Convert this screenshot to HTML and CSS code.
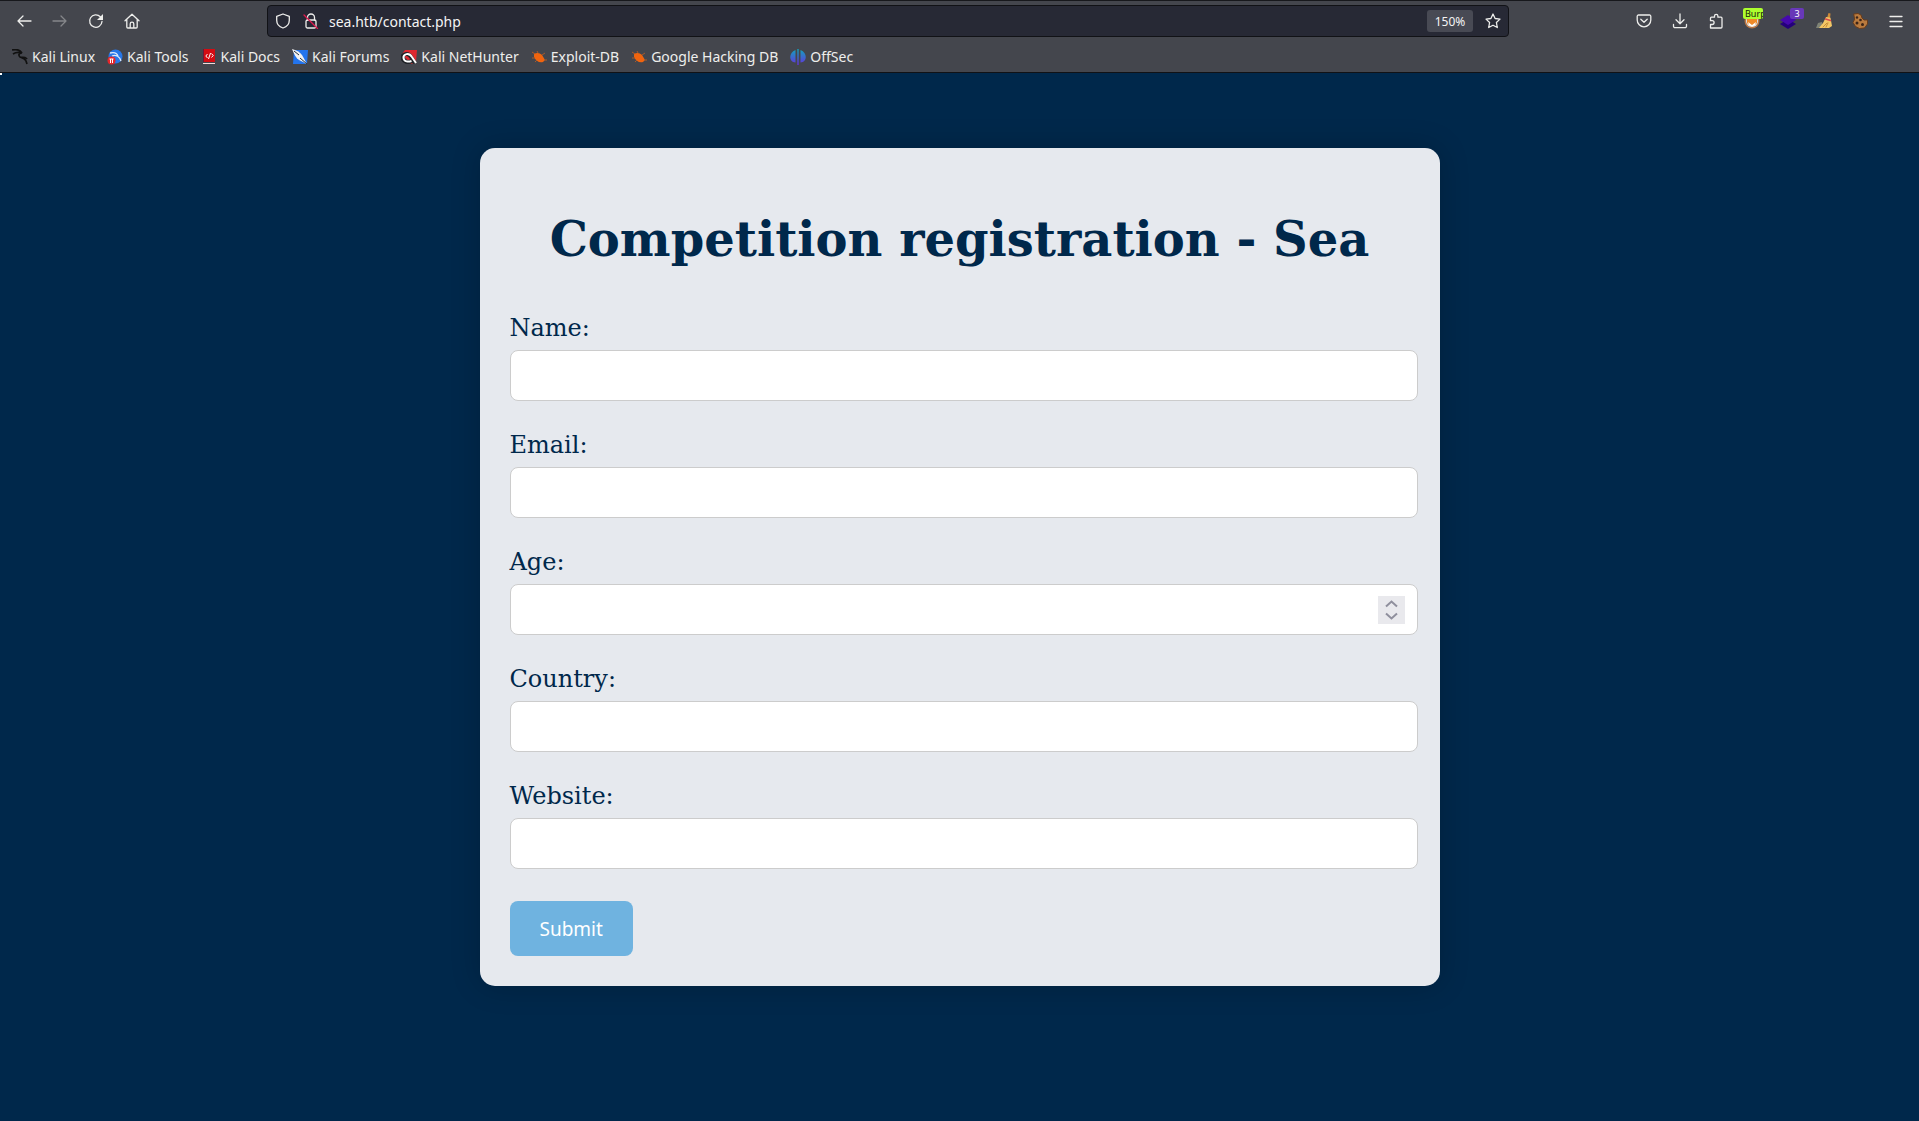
FILE: index.html
```
<!DOCTYPE html>
<html lang="en">
<head>
	<title>Competition registration - Sea</title>
	<meta charset="utf-8"/>
	<link rel="stylesheet" href="styles.css">
</head>
<body>
	<header class="browser">
		<div class="toolbar">
			<button class="tool" type="button" aria-label="Back"><svg width="16" height="16" viewBox="0 0 16 16"><path d="M15 8H2M7 3L2 8l5 5"/></svg></button>
			<button class="tool" type="button" aria-label="Forward" disabled><svg width="16" height="16" viewBox="0 0 16 16"><path d="M1 8h13M9 3l5 5-5 5"/></svg></button>
			<button class="tool" type="button" aria-label="Reload"><svg width="16" height="16" viewBox="0 0 16 16"><path d="M14 8.500A6.200 6.200 0 1 1 12.300 3.800L14 5.500"/><path class="solid" d="M15 1v6H9z"/></svg></button>
			<button class="tool" type="button" aria-label="Home"><svg width="16" height="16" viewBox="0 0 16 16"><path d="M1 7.800L8 1.200l7 6.600M2.800 6.500V14a1 1 0 0 0 1 1h8.400a1 1 0 0 0 1-1V6.500M6.200 15v-4a1.800 1.800 0 0 1 3.600 0v4"/></svg></button>
			<div class="urlbar">
				<svg width="16" height="16" viewBox="0 0 16 16"><path d="M8 1l6.300 2.300v4C14.300 11 12 13.800 8 15 4 13.800 1.700 11 1.700 7.300v-4z"/></svg>
				<svg class="lock" width="16" height="16" viewBox="0 0 16 16"><path d="M4.500 7V4.500a3.500 3.500 0 0 1 7 0V7"/><rect x="3" y="7" width="10" height="8" rx="1.500"/><path class="slash" d="M1 2l13.500 13.500"/></svg>
				<input class="address" type="text" aria-label="Address" value="sea.htb/contact.php">
				<button class="zoom" type="button">150%</button>
				<button class="star" type="button" aria-label="Bookmark this page"><svg width="16" height="16" viewBox="0 0 16 16"><path d="M8 1l2.100 4.500 4.900.6-3.600 3.400.9 5L8 12.200 3.700 14.500l.9-5L1 6.100l4.900-.6z"/></svg></button>
			</div>
			<button class="tool" type="button" aria-label="Pocket"><svg width="16" height="16" viewBox="0 0 16 16"><path d="M2.500 2h11a1.300 1.300 0 0 1 1.300 1.300V7a6.800 6.800 0 0 1-13.600 0V3.300A1.300 1.300 0 0 1 2.500 2zM4.800 6.200L8 9.200l3.200-3"/></svg></button>
			<button class="tool" type="button" aria-label="Downloads"><svg width="16" height="16" viewBox="0 0 16 16"><path d="M8 1v9.500M4 6.800l4 4 4-4M1.500 11.500v1.700a1.500 1.500 0 0 0 1.500 1.500h10a1.500 1.500 0 0 0 1.500-1.500v-1.700"/></svg></button>
			<button class="tool" type="button" aria-label="Extensions"><svg width="16" height="16" viewBox="0 0 16 16"><path d="M2.500 15V11.500h1.700a1.900 1.900 0 0 0 0-3.800H2.500V5.200a1 1 0 0 1 1-1h3V3a1.700 1.700 0 0 1 3.400 0v1.200H13a1 1 0 0 1 1 1V14a1 1 0 0 1-1 1z"/></svg></button>
			<button class="tool" type="button" aria-label="FoxyProxy">
				<svg class="colour" width="16" height="16" viewBox="0 0 16 16"><circle cx="8" cy="8" r="7.500" fill="#b87848"/><circle cx="8" cy="8" r="6" fill="#dde3e8"/><path d="M3 4l3 2h4l3-2v6l-5 4-5-4z" fill="#f08a28"/><path d="M4 9l4 3 4-3-1 3-3 2-3-2z" fill="#fff"/></svg>
				<span class="badge badge-burp">Burp</span>
			</button>
			<button class="tool" type="button" aria-label="Wappalyzer">
				<svg class="colour" width="16" height="16" viewBox="0 0 16 16"><path d="M0 11l8-5 8 5-8 5z" fill="#25007c"/><path d="M0 7l8-5 8 5-8 5z" fill="#4608ad"/></svg>
				<span class="badge badge-count">3</span>
			</button>
			<button class="tool" type="button" aria-label="Clear cache"><svg class="colour" width="16" height="16" viewBox="0 0 16 16"><path d="M0 15l2-5 4-1 1 6z" fill="#7f8376"/><path d="M12.500 0l2 .5-.5 5-3-.5z" fill="#d08a38"/><path d="M10 4l4.500.7L16 13l-3 2H3l4-5z" fill="#f3c766"/><path d="M9.500 6l5 1.500" stroke="#d9484b" stroke-width="1.500"/><path d="M7 14l4-4M10 14l2-4" stroke="#c68d36" stroke-width="1"/></svg></button>
			<button class="tool" type="button" aria-label="Cookie editor"><svg class="colour" width="16" height="16" viewBox="0 0 16 16"><path d="M2 1l4-.5 3 1.500 1 3 2 2 3.500 0 0 4-3 4-5 .5-4-2-2.500-4 1.500-3z" fill="#b97a3e" stroke="#6a3d1c" stroke-width="1"/><circle cx="5" cy="4.500" r="1.200" fill="#3d2418"/><circle cx="8.500" cy="7" r="1.300" fill="#3d2418"/><circle cx="5" cy="10" r="1.500" fill="#3d2418"/><circle cx="10.500" cy="11.500" r="1.500" fill="#3d2418"/></svg></button>
			<button class="tool" type="button" aria-label="Menu"><svg width="16" height="16" viewBox="0 0 16 16"><path d="M2 3.500h12M2 8.500h12M2 13.500h12"/></svg></button>
		</div>
		<nav class="bookmarks">
			<a href="#"><svg width="16" height="16" viewBox="0 0 16 16"><path d="M0 1c4-1 8 0 10 3M1 5c3-2 6-2 9-1-3 0-4 2-2 4 2 1 5 1 6 4l1 3M8 8c3 0 6 0 7 2" fill="none" stroke="#111" stroke-width="1.700"/></svg>Kali Linux</a>
			<a href="#"><svg width="16" height="16" viewBox="0 0 16 16"><circle cx="8.500" cy="7.500" r="7" fill="#2777e8"/><path d="M3 4c4-1 7 0 8 3M5 7c4-2 8 1 9 5" fill="none" stroke="#dbe9fc" stroke-width="1.300"/><circle cx="4.500" cy="11.500" r="4" fill="#e5262b"/><path d="M2.500 10h4M3.500 10v4M5.500 10v4" stroke="#fff" stroke-width="1"/></svg>Kali Tools</a>
			<a href="#"><svg width="16" height="16" viewBox="0 0 16 16"><path d="M2 0h12v13H2z" fill="#d40c12"/><path d="M2 0h1v13H2z" fill="#6f1838"/><path d="M2 14h12v1H2z" fill="#f3d9d9"/><path d="M6.500 5L4.800 7l1.700 2M10.500 4.500l1.700 2-1.700 2M9.500 4l-2 6" fill="none" stroke="#fff" stroke-width="1"/></svg>Kali Docs</a>
			<a href="#"><svg width="16" height="16" viewBox="0 0 16 16"><path d="M2 1h14l-1 14H1z" fill="#2374ed"/><path d="M0 0c4 1 8 3 10 6l5 9-8-4C4 9 2 5 0 0z" fill="#f2f2f2"/><path d="M2 2l5 4M8 9l7 6" stroke="#26313d" stroke-width="1"/></svg>Kali Forums</a>
			<a href="#"><svg width="16" height="16" viewBox="0 0 16 16"><path d="M4 1h12l-1 12-5 2L1 5z" fill="#df2830"/><path d="M14 14L10 8C7 3 1 5 1.500 9c.5 4 6 5 9 3" fill="none" stroke="#202328" stroke-width="4"/><path d="M15 14L11 8C8 3 2 5 2.500 9c.5 4 5 4 8 3" fill="none" stroke="#fff" stroke-width="2"/></svg>Kali NetHunter</a>
			<a href="#"><svg width="16" height="16" viewBox="0 0 16 16"><path d="M3 5c3-2 6-1 8 1l3 5-2 2c-4 1-7-1-9-5z" fill="#f0640f"/><path d="M4 5L1 3M7 4L6 2M11 6l3-2M4 9H1M6 11l-2 2M13 11h3" stroke="#a95a2c" stroke-width="1"/></svg>Exploit-DB</a>
			<a href="#"><svg width="16" height="16" viewBox="0 0 16 16"><path d="M3 5c3-2 6-1 8 1l3 5-2 2c-4 1-7-1-9-5z" fill="#f0640f"/><path d="M4 5L1 3M7 4L6 2M11 6l3-2M4 9H1M6 11l-2 2M13 11h3" stroke="#a95a2c" stroke-width="1"/></svg>Google Hacking DB</a>
			<a href="#"><svg width="16" height="16" viewBox="0 0 16 16"><defs><linearGradient id="offsec" x1="0" y1="0" x2="0" y2="1"><stop offset="0" stop-color="#10a5bd"/><stop offset="1" stop-color="#6630dd"/></linearGradient></defs><path d="M5.500 1v12.500C-1.500 13-1.500 3.500 5.500 1zM7.300 0h1.400v16H7.300zM10.500 1c7 2.500 7 12 0 12.500z" fill="url(#offsec)"/></svg>OffSec</a>
		</nav>
	</header>
	<main class="page">
		<div class="container">
			<h1>Competition registration - Sea</h1>
			<form class="registration">
				<div class="field">
					<label for="name">Name:</label>
					<input type="text" id="name" name="name">
				</div>
				<div class="field">
					<label for="email">Email:</label>
					<input type="email" id="email" name="email">
				</div>
				<div class="field">
					<label for="age">Age:</label>
					<input type="number" id="age" name="age">
				</div>
				<div class="field">
					<label for="country">Country:</label>
					<input type="text" id="country" name="country">
				</div>
				<div class="field">
					<label for="website">Website:</label>
					<input type="text" id="website" name="website">
				</div>
				<button class="submit" type="submit">Submit</button>
			</form>
		</div>
	</main>
</body>
</html>
```
FILE: styles.css
```
* {
	box-sizing: border-box;
}

body {
	background: #00284b;
	color: #00284b;
	font-family: "DejaVu Serif", serif;
	font-size: 24px;
	margin: 0;
}

button {
	border: 0;
	font-family: inherit;
	margin: 0;
	padding: 0;
}

svg {
	display: block;
	flex: none;
}

/* browser bars */

.browser {
	background: #44464d;
	border-bottom: 1px solid #111216;
	border-top: 1px solid #17181c;
	color: #eeeeec;
	font-family: "Noto Sans", sans-serif;
	font-size: 14px;
}

.toolbar {
	align-items: center;
	display: flex;
	height: 40px;
	padding: 0 5px 0 6px;
}

.tool {
	align-items: center;
	background: none;
	color: #eeeeec;
	display: flex;
	flex: none;
	height: 32px;
	justify-content: center;
	position: relative;
	width: 36px;
}

.tool:disabled {
	color: #85868a;
}

.toolbar svg {
	fill: none;
	stroke: currentColor;
	stroke-linecap: round;
	stroke-linejoin: round;
	stroke-width: 1.3;
}

.toolbar .colour {
	stroke: none;
}

.toolbar .solid {
	fill: currentColor;
	stroke: none;
}

.toolbar .slash {
	stroke: #e2184e;
}

.badge {
	border-radius: 2px;
	font-size: 9px;
	height: 11px;
	line-height: 11px;
	overflow: hidden;
	position: absolute;
}

.badge-burp {
	background: #adff2f;
	color: #16200a;
	left: 9px;
	padding-left: 2px;
	text-align: left;
	top: 3px;
	width: 20px;
}

.badge-count {
	background: #6838b8;
	color: #fff;
	left: 20px;
	top: 3px;
	width: 14px;
}

.urlbar {
	align-items: center;
	background: #272935;
	border: 1px solid #111216;
	border-radius: 4px;
	display: flex;
	flex: 1;
	height: 32px;
	margin: 0 117px;
	padding: 0 7px;
}

.lock {
	margin-left: 12px;
}

.address {
	background: none;
	border: 0;
	color: #f4f4f4;
	flex: 1;
	font-family: inherit;
	font-size: 14px;
	min-width: 0;
	padding: 0 10px;
}

.zoom {
	background: #484a54;
	border-radius: 3px;
	color: #f4f4f4;
	font-size: 12px;
	height: 22px;
	width: 46px;
}

.star {
	background: none;
	color: #eeeeec;
	margin-left: 12px;
}

.bookmarks {
	align-items: center;
	display: flex;
	gap: 12px;
	height: 31px;
	padding: 0 12px;
}

.bookmarks a {
	align-items: center;
	color: inherit;
	display: flex;
	gap: 4px;
	text-decoration: none;
	white-space: nowrap;
}

/* page */

.page {
	padding: 75px 20px;
	position: relative;
}

/* caret left in the corner of the page */
.page::before {
	background: #fff;
	content: "";
	height: 2px;
	left: 0;
	position: absolute;
	top: 0;
	width: 2px;
}

.container {
	background: #e6e9ee;
	border-radius: 15px;
	box-shadow: 0 0 30px rgba(0, 0, 0, 0.2);
	margin: 0 auto;
	max-width: 960px;
	padding: 30px;
}

h1 {
	font-size: 48px;
	line-height: 56px;
	margin: 33px 0 47px;
	text-align: center;
}

.registration {
	margin-right: -8px;
}

.field {
	margin-bottom: 30px;
}

.field label {
	display: block;
	line-height: 28px;
	margin-bottom: 8px;
}

.field input {
	background: #fff;
	border: 1px solid #ccc;
	border-radius: 8px;
	display: block;
	font-family: "Noto Sans", sans-serif;
	font-size: 20px;
	height: 51px;
	padding: 0 12px;
	width: 100%;
}

.field:last-of-type {
	margin-bottom: 32px;
}

.field input::-webkit-inner-spin-button {
	-webkit-appearance: none;
	background: #e9e9ed url("data:image/svg+xml,%3Csvg xmlns='http://www.w3.org/2000/svg' width='27' height='28' fill='none' stroke='%238f8f9d' stroke-width='2'%3E%3Cpath d='M8 10.500l5.500-5 5.500 5M8 17.500l5.500 5 5.500-5'/%3E%3C/svg%3E") no-repeat center;
	height: 28px;
	opacity: 1;
	width: 27px;
}

.submit {
	background: #6fb3e0;
	border-radius: 8px;
	color: #fff;
	display: block;
	font-family: "Noto Sans", sans-serif;
	font-size: 19px;
	height: 55px;
	padding: 0 30px;
}
```
